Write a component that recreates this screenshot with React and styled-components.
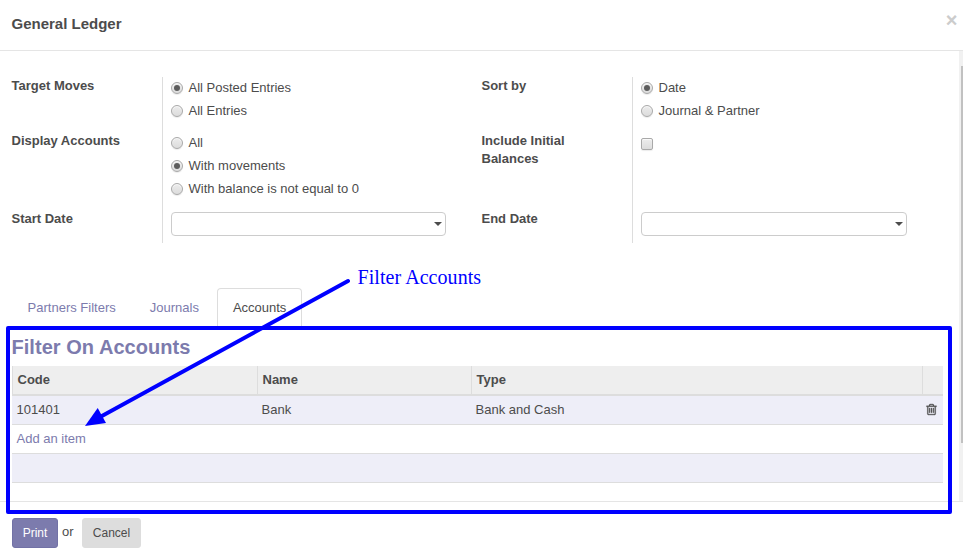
import React from "react";
import styled, { createGlobalStyle, css } from "styled-components";

const GlobalStyle = createGlobalStyle`
  *, *::before, *::after { box-sizing: border-box; }
  body {
    margin: 0;
    background: #fff;
    color: #4c4c4c;
    font: 13px/18px "Liberation Sans", Arial, sans-serif;
    overflow: hidden;
  }
`;

const Dialog = styled.div`
  position: relative;
  display: flex;
  flex-direction: column;
  width: 963px;
  height: 553px;
`;

const Header = styled.header`
  display: flex;
  justify-content: space-between;
  align-items: flex-start;
  height: 51px;
  padding: 14px 5.5px 0 11.5px;
  border-bottom: 1px solid #e5e5e5;
`;

const Title = styled.h4`
  margin: 0;
  font-size: 15px;
  line-height: 20px;
`;

const Close = styled.button`
  margin: -4px 0 0;
  padding: 0;
  border: 0;
  background: none;
  color: #ccc;
  font: bold 20px/20px "Liberation Sans", Arial, sans-serif;
`;

const Body = styled.main`
  display: flex;
  height: 450px;
`;

const Content = styled.div`
  flex: 1;
  padding: 26px 16px 0 12px;
`;

const ScrollTrack = styled.div`
  width: 4px;
  padding: 15px 0 0 2px;
  background: #f1f1f1;
`;

const ScrollThumb = styled.div`
  height: 377px;
  background: #c1c1c1;
`;

const Groups = styled.div`
  display: grid;
  grid-template-columns: 434px 425px;
  column-gap: 36px;
`;

const Group = styled.div`
  display: grid;
  grid-template-columns: 150px 1fr;
  grid-template-rows: 55px 78px 33px;
`;

const Label = styled.label`
  padding-right: 40px;
  margin-left: -0.5px;
  font-weight: bold;
`;

const Field = styled.div`
  padding-left: 8px;
  border-left: 1px solid #ddd;
`;

const Option = styled.div`
  display: flex;
  align-items: center;
  gap: 5.5px;
  height: 23px;
  padding-bottom: 1px;
`;

const control = css`
  width: 12px;
  height: 12px;
  border: 1px solid #a9a9a9;
  background: linear-gradient(#ececec, #dcdcdc);
  box-shadow: 0 1px 1px rgba(0, 0, 0, 0.08), inset 0 1px 1px rgba(255, 255, 255, 0.75);
`;

const RadioMark = styled.span`
  ${control}
  display: flex;
  align-items: center;
  justify-content: center;
  border-radius: 50%;

  &::after {
    content: "";
    width: 6px;
    height: 6px;
    border-radius: 50%;
    background: ${(p) => (p.$checked ? "#5c5c5c" : "transparent")};
  }
`;

const CheckMark = styled.span`
  ${control}
  display: block;
  margin-top: 6px;
  border-radius: 2px;
`;

const DateInput = styled.div`
  display: flex;
  align-items: center;
  justify-content: flex-end;
  height: 24px;
  margin-top: 2px;
  padding-right: 3px;
  border: 1px solid #ccc;
  border-radius: 4px;
`;

const Caret = styled.span`
  border: 4px solid transparent;
  border-top-color: #4c4c4c;
  border-bottom: 0;
`;

const Tabs = styled.nav`
  display: flex;
  gap: 2px;
  height: 39px;
  margin: 45px 0 0 -0.4px;
  border-bottom: 1px solid #ddd;
`;

const Tab = styled.a`
  height: 39px;
  padding: 10px 15px;
  border: 1px solid ${(p) => (p.$active ? "#ddd" : "transparent")};
  border-bottom-color: ${(p) => (p.$active ? "#fff" : "transparent")};
  border-radius: 4px 4px 0 0;
  color: ${(p) => (p.$active ? "#4c4c4c" : "#7c7bad")};
`;

const Section = styled.h2`
  height: 39px;
  margin: 0 0 0 -0.5px;
  padding-top: 8px;
  color: #7c7bad;
  font-size: 20px;
  line-height: 24px;
  letter-spacing: 0.04px;
`;

const Table = styled.div`
  width: 931px;
`;

const Row = styled.div`
  display: grid;
  grid-template-columns: 245px 214px 451px 21px;
  height: 29px;
  border-bottom: 1px solid #ddd;
  background: ${(p) => (p.$striped ? "#eeeef8" : "#fff")};
`;

const HeadRow = styled(Row)`
  height: 30px;
  border-bottom-width: 2px;
  background: #eee;
  font-weight: bold;
`;

const HeadCell = styled.div`
  padding: 5px 0 0 4.5px;
  border-left: 1px solid #ddd;
`;

const Cell = styled.div`
  padding: 5px 0 0 4.5px;
`;

const IconCell = styled.div`
  padding: 7px 0 0 3px;
  line-height: 0;
`;

const AddLink = styled.a`
  padding: 5px 0 0 4.5px;
  color: #7c7bad;
`;

const Footer = styled.footer`
  display: flex;
  align-items: flex-start;
  height: 52px;
  padding: 16px 12px 0;
  border-top: 1px solid #e5e5e5;
`;

const Button = styled.button`
  width: ${(p) => p.$width}px;
  height: 30px;
  padding: 0;
  border: 1px solid ${(p) => (p.$primary ? "#7272a6" : "#ddd")};
  border-radius: 3px;
  background: ${(p) => (p.$primary ? "#7c7bad" : "#ddd")};
  color: ${(p) => (p.$primary ? "#fff" : "#4c4c4c")};
  font: 12px/18px "Liberation Sans", Arial, sans-serif;
`;

const Or = styled.span`
  width: 24px;
  padding: 5px 0 0 4px;
`;

const Annotation = styled.svg`
  position: absolute;
  inset: 0;
  pointer-events: none;
`;

const Callout = styled.span`
  position: absolute;
  left: 357.5px;
  top: 265px;
  color: #00f;
  font: 20px/24px "Liberation Serif", "Times New Roman", serif;
  letter-spacing: 0.06px;
  white-space: nowrap;
`;

function Radio({ checked, children }) {
  return (
    <Option role="radio" aria-checked={!!checked}>
      <RadioMark $checked={checked} />
      {children}
    </Option>
  );
}

function DatePicker() {
  return (
    <DateInput>
      <Caret />
    </DateInput>
  );
}

function TrashIcon() {
  return (
    <svg width="13" height="13" viewBox="0 0 1792 1792" fill="#4c4c4c" stroke="#4c4c4c" strokeWidth="40">
      <path d="M704 736v576q0 14-9 23t-23 9h-64q-14 0-23-9t-9-23v-576q0-14 9-23t23-9h64q14 0 23 9t9 23zm256 0v576q0 14-9 23t-23 9h-64q-14 0-23-9t-9-23v-576q0-14 9-23t23-9h64q14 0 23 9t9 23zm256 0v576q0 14-9 23t-23 9h-64q-14 0-23-9t-9-23v-576q0-14 9-23t23-9h64q14 0 23 9t9 23zm128 724v-948h-896v948q0 22 7 40.5t14.5 27 10.5 8.5h832q3 0 10.5-8.5t14.5-27 7-40.5zm-672-1076h448l-48-117q-7-9-17-11h-317q-10 2-17 11zm928 32v64q0 14-9 23t-23 9h-96v948q0 83-47 143.5t-113 60.5h-832q-66 0-113-58.5t-47-141.5v-952h-96q-14 0-23-9t-9-23v-64q0-14 9-23t23-9h309l70-167q15-37 54-63t79-26h320q40 0 79 26t54 63l70 167h309q14 0 23 9t9 23z" />
    </svg>
  );
}

export default function App() {
  return (
    <>
      <GlobalStyle />
      <Dialog>
        <Header>
          <Title>General Ledger</Title>
          <Close aria-label="Close">×</Close>
        </Header>
        <Body>
          <Content>
            <Groups>
              <Group>
                <Label>Target Moves</Label>
                <Field>
                  <Radio checked>All Posted Entries</Radio>
                  <Radio>All Entries</Radio>
                </Field>
                <Label>Display Accounts</Label>
                <Field>
                  <Radio>All</Radio>
                  <Radio checked>With movements</Radio>
                  <Radio>With balance is not equal to 0</Radio>
                </Field>
                <Label>Start Date</Label>
                <Field>
                  <DatePicker />
                </Field>
              </Group>
              <Group>
                <Label>Sort by</Label>
                <Field>
                  <Radio checked>Date</Radio>
                  <Radio>Journal &amp; Partner</Radio>
                </Field>
                <Label>Include Initial Balances</Label>
                <Field>
                  <CheckMark />
                </Field>
                <Label>End Date</Label>
                <Field>
                  <DatePicker />
                </Field>
              </Group>
            </Groups>
            <Tabs>
              <Tab>Partners Filters</Tab>
              <Tab>Journals</Tab>
              <Tab $active>Accounts</Tab>
            </Tabs>
            <Section>Filter On Accounts</Section>
            <Table>
              <HeadRow>
                <HeadCell>Code</HeadCell>
                <HeadCell>Name</HeadCell>
                <HeadCell>Type</HeadCell>
                <HeadCell />
              </HeadRow>
              <Row $striped>
                <Cell>101401</Cell>
                <Cell>Bank</Cell>
                <Cell>Bank and Cash</Cell>
                <IconCell>
                  <TrashIcon />
                </IconCell>
              </Row>
              <Row>
                <AddLink>Add an item</AddLink>
              </Row>
              <Row $striped />
            </Table>
          </Content>
          <ScrollTrack>
            <ScrollThumb />
          </ScrollTrack>
        </Body>
        <Footer>
          <Button $primary $width={46}>Print</Button>
          <Or>or</Or>
          <Button $width={59}>Cancel</Button>
        </Footer>
        <Annotation width="963" height="553" viewBox="0 0 963 553">
          <rect x="8" y="328" width="942" height="184" fill="none" stroke="#00f" strokeWidth="4" strokeLinejoin="round" />
          <path d="M348 281L101 416.5" stroke="#00f" strokeWidth="4" strokeLinecap="round" />
          <path d="M85 426L97.7 408L106 423Z" fill="#00f" />
        </Annotation>
        <Callout>Filter Accounts</Callout>
      </Dialog>
    </>
  );
}
